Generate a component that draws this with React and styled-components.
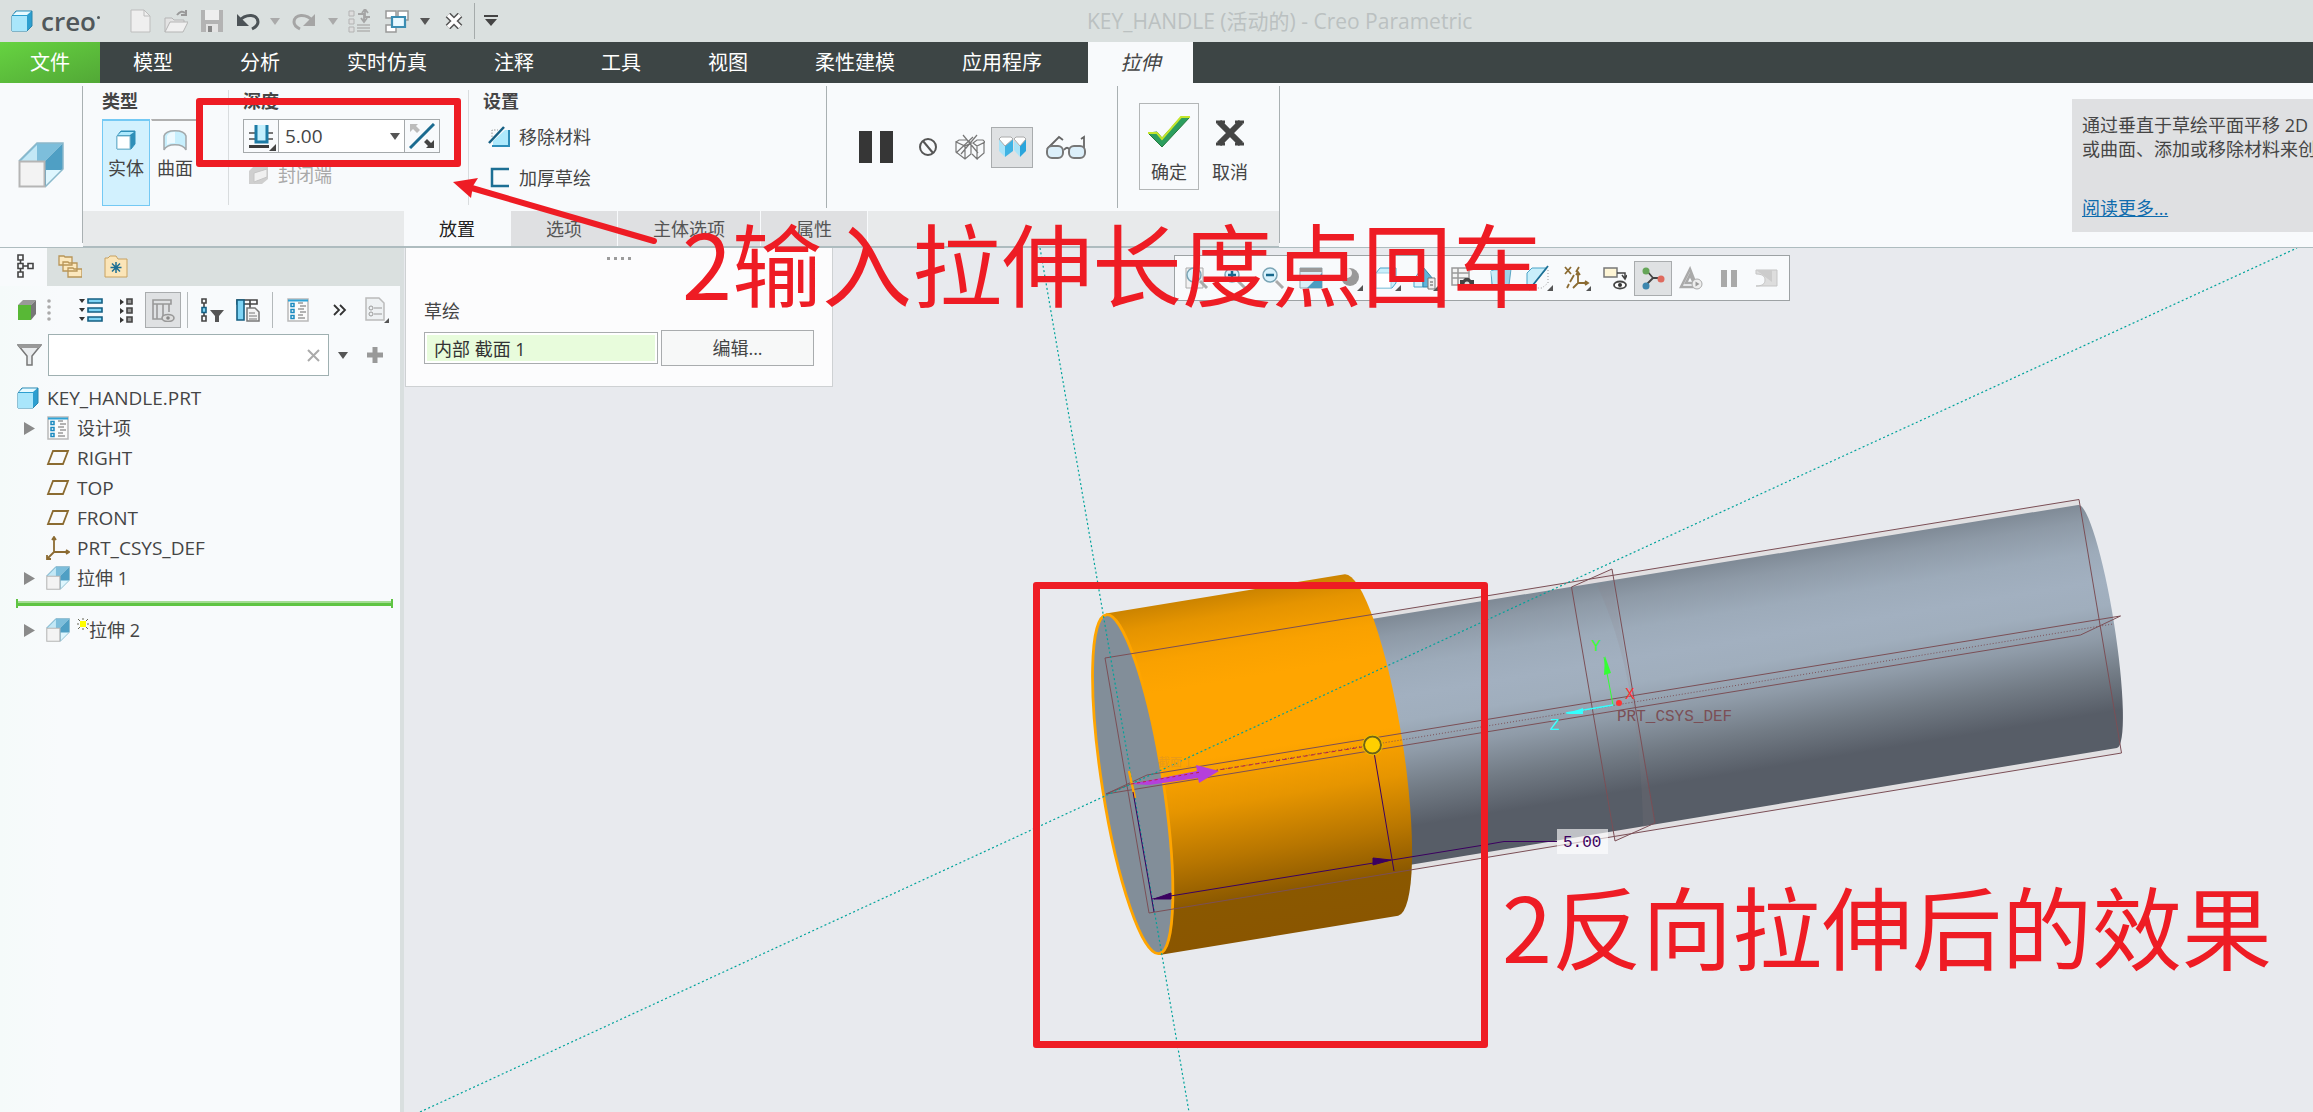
import React from "react";
import styled, { createGlobalStyle, css } from "styled-components";

const Global = createGlobalStyle`
  * { box-sizing: border-box; }
  body { margin: 0; background: #e8eaee; overflow: hidden; }
  button, input { font: inherit; color: inherit; margin: 0; }
  svg { display: block; flex: none; }
`;

const Page = styled.div`
  position: relative;
  display: flex;
  flex-direction: column;
  min-height: 100vh;
  overflow: hidden;
  color: #454545;
  font: 18px/24px "Open Sans", "Noto Sans CJK SC", sans-serif;
`;

const plainButton = css`
  display: flex;
  flex: none;
  align-items: center;
  justify-content: center;
  padding: 0;
  border: 0;
  background: none;
  white-space: nowrap;
`;

/* ---------- title bar ---------- */
const TitleBar = styled.header`
  display: flex;
  align-items: center;
  height: 42px;
  background: #dae0df;
`;
const Brand = styled.div`
  display: flex;
  align-items: center;
  gap: 8px;
  width: 122px;
  padding-left: 11px;
  color: #50575a;
  font: 600 26px/32px "Open Sans", sans-serif;
`;
const BrandName = styled.span`
  display: flex;
  align-items: center;
  gap: 1px;
`;
const BrandDot = styled.i`
  width: 3px;
  height: 3px;
  margin-bottom: 8px;
  border-radius: 50%;
  background: #50575a;
`;
const QuickButton = styled.button`
  ${plainButton}
  width: ${(p) => p.$w || 36}px;
  height: 36px;
`;
const QuickRule = styled.span`
  width: 1px;
  height: 36px;
  background: #a5abab;
`;
const WindowTitle = styled.h1`
  flex: 1;
  margin: 0;
  padding-left: 580px;
  color: #bbc1c1;
  font-size: 21px;
  font-weight: 400;
`;

/* ---------- menu tabs ---------- */
const MenuBar = styled.nav`
  display: flex;
  height: 41px;
  background: #3d4545;
  color: #fff;
  font-size: 20px;
`;
const MenuTab = styled.button`
  ${plainButton}
  padding: 0 34px 0 33px;
`;
const FileTab = styled.button`
  ${plainButton}
  width: 100px;
  background: linear-gradient(160deg, #66d341, #52a836);
`;
const ActiveTab = styled.button`
  ${plainButton}
  width: 105px;
  margin-left: 12px;
  background: #f8fafc;
  color: #454545;
  font-style: italic;
`;

/* ---------- ribbon ---------- */
const Ribbon = styled.section`
  display: flex;
  height: 165px;
  border-bottom: 1px solid #aebcbf;
  background: #f8fafc;
`;
const FeatureCell = styled.div`
  display: flex;
  align-items: center;
  justify-content: center;
  width: 83px;
  margin: 3px 0 4px;
  border-right: 1px solid #a9b0b2;
`;
const Dashboard = styled.div`
  display: flex;
  flex-direction: column;
  width: 1196px;
`;
const Groups = styled.div`
  display: flex;
  height: 128px;
`;
const Group = styled.div`
  display: flex;
  flex-direction: column;
  width: ${(p) => p.$w}px;
  margin: 7px 0 6px;
  padding-left: ${(p) => p.$pl}px;
  border-right: 1px solid ${(p) => (p.$open ? "transparent" : "#d9dcde")};
`;
const GroupTitle = styled.h2`
  margin: 0 0 6px;
  font-size: 18px;
  line-height: 23px;
  font-weight: 700;
`;
const TypeRow = styled.div`
  display: flex;
  gap: 1px;
`;
const TypeButton = styled.button`
  ${plainButton}
  flex-direction: column;
  justify-content: flex-start;
  gap: 5px;
  width: 48px;
  height: 87px;
  padding-top: 8px;
  border: 1px solid ${(p) => (p.$on ? "#74c9f4" : "transparent")};
  border-top: 2px solid ${(p) => (p.$on ? "#74c9f4" : "#b0b0b0")};
  background: ${(p) => (p.$on ? "#d2f1fe" : "none")};
`;
const DepthBox = styled.div`
  display: flex;
  width: 197px;
  height: 34px;
  border: 1px solid #a5a9ab;
`;
const DepthButton = styled.button`
  ${plainButton}
  width: 34px;
`;
const DepthField = styled.div`
  display: flex;
  flex: 1;
  align-items: center;
  padding-right: 4px;
  border: solid #a5a9ab;
  border-width: 0 1px;
  background: #fff;
`;
const DepthInput = styled.input`
  flex: 1;
  width: 80px;
  padding: 0 6px;
  border: 0;
  background: none;
  outline: 0;
  font-size: 19px;
`;
const Option = styled.button`
  ${plainButton}
  justify-content: flex-start;
  gap: 9px;
  height: ${(p) => p.$h || 41}px;
  padding-left: 5px;
  color: ${(p) => (p.$off ? "#a9a9a9" : "inherit")};
`;
const Options = styled.div`
  display: flex;
  flex-direction: column;
  margin-top: -3px;
`;
const Controls = styled.div`
  display: flex;
  align-items: center;
  width: 292px;
  margin: 3px 0;
  padding-left: 22px;
  border: solid #a9b0b2;
  border-width: 0 1px;
`;
const ControlButton = styled.button`
  ${plainButton}
  width: ${(p) => p.$w}px;
  height: 41px;
  border: 1px solid ${(p) => (p.$on ? "#a9acae" : "transparent")};
  background: ${(p) => (p.$on ? "#dfe1e3" : "none")};
`;
const Finish = styled.div`
  display: flex;
  gap: 1px;
  padding: 20px 0 0 21px;
`;
const FinishButton = styled.button`
  ${plainButton}
  flex-direction: column;
  justify-content: flex-end;
  gap: 10px;
  width: 60px;
  height: 87px;
  padding-bottom: 5px;
  border: 1px solid ${(p) => (p.$on ? "#b3b6b7" : "transparent")};
`;
const PanelTabs = styled.div`
  display: flex;
  height: 36px;
  padding-left: 321px;
  border-bottom: 1px solid #aebcbf;
  background: #e8eaeb;
`;
const PanelTab = styled.button`
  ${plainButton}
  padding: 0 35px;
  border-right: 1px solid #f8fafc;
  background: ${(p) => (p.$on ? "#f8fafc" : "#dfe0e2")};
  color: ${(p) => (p.$on ? "#222" : "#555")};
`;
const RibbonEnd = styled.div`
  flex: 1;
  display: flex;
  justify-content: flex-end;
  margin: 3px 0 4px;
  padding-top: 13px;
  border-left: 1px solid #a9b0b2;
`;
const Help = styled.aside`
  width: 241px;
  height: 133px;
  padding: 14px 0 0 10px;
  overflow: hidden;
  background: #dfe0e2;
  white-space: nowrap;
`;
const HelpText = styled.p`
  margin: 0 0 35px;
`;
const HelpLink = styled.a`
  color: #106cad;
`;

/* ---------- model tree ---------- */
const Workspace = styled.main`
  flex: 1;
  display: flex;
`;
const Sidebar = styled.aside`
  display: flex;
  flex-direction: column;
  width: 404px;
  border-right: 4px solid #d9dfdf;
  background: linear-gradient(90deg, #f5fafa, #f8fafc 60px);
`;
const SideTabs = styled.div`
  display: flex;
  height: 38px;
  background: #dae0df;
`;
const SideTab = styled.button`
  ${plainButton}
  width: ${(p) => p.$w}px;
  padding-bottom: 2px;
  padding-left: 4px;
  background: ${(p) => (p.$on ? "#f8fafc" : "none")};
`;
const SideTools = styled.div`
  display: flex;
  align-items: center;
  height: 48px;
  padding-left: 9px;
`;
const SideTool = styled.button`
  ${plainButton}
  width: ${(p) => p.$w || 36}px;
  height: 36px;
  margin-left: ${(p) => (p.$on ? 8 : 0)}px;
  border: 1px solid ${(p) => (p.$on ? "#a9acae" : "transparent")};
  background: ${(p) => (p.$on ? "#dfe1e3" : "none")};
`;
const ToolRule = styled.span`
  width: 1px;
  height: 36px;
  margin: 0 6px;
  background: #b4b9bb;
`;
const FilterRow = styled.div`
  display: flex;
  align-items: center;
  height: 42px;
  padding-left: 17px;
`;
const FilterBox = styled.div`
  display: flex;
  align-items: center;
  width: 281px;
  height: 42px;
  margin-left: 6px;
  padding-right: 8px;
  border: 1px solid #9fb0b1;
  background: #fff;
`;
const FilterInput = styled.input`
  flex: 1;
  min-width: 0;
  border: 0;
  outline: 0;
  background: none;
`;
const Tree = styled.ul`
  margin: 0;
  padding: 7px 0 0 16px;
  list-style: none;
`;
const TreeRow = styled.li`
  display: flex;
  align-items: center;
  gap: ${(p) => (p.$root ? 8 : 7)}px;
  height: 30px;
  padding-left: ${(p) => (p.$root ? 1 : 0)}px;
  font-size: ${(p) => (p.$latin ? 19 : 18)}px;
`;
const Twisty = styled.span`
  display: flex;
  justify-content: flex-end;
  width: 23px;
  padding-right: 4px;
`;
const NodeName = styled.span`
  display: flex;
`;
const InsertMark = styled.li`
  height: 22px;
  padding: 6px 7px 0 0;
`;
const InsertBar = styled.div`
  height: 9px;
  border: solid #5fc443;
  border-width: 0 2px;
  background: linear-gradient(transparent 2px, #a4dc94 2px 4px, #5fc443 4px 7px, transparent 7px);
`;

/* ---------- graphics area ---------- */
const Viewport = styled.section`
  position: relative;
  flex: 1;
  overflow: hidden;
`;
const Scene = styled.svg`
  position: absolute;
  inset: 0;
  width: 100%;
  height: 100%;
`;
const Placement = styled.div`
  position: absolute;
  top: 0;
  left: 1px;
  display: flex;
  flex-direction: column;
  width: 428px;
  height: 139px;
  padding: 9px 18px 0;
  border: 1px solid #ced1d3;
  border-top: 0;
  background: #fcfcfd;
`;
const Grip = styled.div`
  display: flex;
  justify-content: center;
  gap: 4px;
  height: 42px;
`;
const GripDot = styled.i`
  width: 3px;
  height: 3px;
  background: #9b9b9b;
`;
const SketchRow = styled.div`
  display: flex;
  align-items: center;
  gap: 3px;
  margin-top: 7px;
`;
const SketchInput = styled.input`
  width: 234px;
  height: 32px;
  padding: 0 9px;
  border: 1px solid #a9acae;
  outline: 0;
  background: #e8fcdc;
  box-shadow: inset 0 0 0 2px #fff;
  color: #333;
`;
const EditButton = styled.button`
  ${plainButton}
  width: 153px;
  height: 36px;
  border: 1px solid #a9acae;
  background: #f7f8f8;
`;
const ViewTools = styled.div`
  position: absolute;
  top: 7px;
  left: 770px;
  display: flex;
  align-items: center;
  height: 46px;
  padding: 0 3px;
  border: 1px solid #9da2a4;
  background: #f8fafc;
`;
const ViewTool = styled.button`
  ${plainButton}
  width: 38px;
  height: 35px;
  border: 1px solid ${(p) => (p.$on ? "#a9acae" : "transparent")};
  background: ${(p) => (p.$on ? "#dfe1e3" : "none")};
`;

/* ---------- markup on top of the window ---------- */
const MarkBox = styled.div`
  position: absolute;
  top: ${(p) => p.$y}px;
  left: ${(p) => p.$x}px;
  width: ${(p) => p.$w}px;
  height: ${(p) => p.$h}px;
  border: 7px solid #ee1c24;
  border-radius: 3px;
  pointer-events: none;
`;
const MarkText = styled.p`
  position: absolute;
  top: ${(p) => p.$y}px;
  left: ${(p) => p.$x}px;
  margin: 0;
  color: #ee1c24;
  font: 90px/100px "Noto Sans CJK SC", sans-serif;
  white-space: nowrap;
  pointer-events: none;
`;
const MarkArrow = styled.svg`
  position: absolute;
  top: 170px;
  left: 445px;
  pointer-events: none;
`;

/* ---------- icons ---------- */
const Ic = ({ w = 24, h = 24, children, ...rest }) => (
  <svg width={w} height={h} viewBox={`0 0 ${w} ${h}`} fill="none" aria-hidden="true" {...rest}>{children}</svg>
);
const Caret = ({ c = "#555" }) => <Ic w={10} h={7}><path d="M0 0h10L5 7z" fill={c} /></Ic>;
const Cube = ({ s = 22 }) => (
  <svg width={s} height={s} viewBox="0 0 22 22" aria-hidden="true">
    <path d="M1 6 5 1h16v15l-5 5H1z" fill="#2d9fd0" stroke="#2b86ad" />
    <path d="M1 6h15v15H1z" fill="#a9e6fb" /><path d="M2 5 5.500 1.500H20L16 5z" fill="#e8faff" />
  </svg>
);
const Extrude = ({ s = 24 }) => (
  <svg width={s} height={s} viewBox="0 0 46 46" aria-hidden="true">
    <path d="M1 19 19 1h26L27 19z" fill="#7dbedb" /><path d="M27 19 45 1v26L27 45z" fill="#4f9fc4" />
    <path d="M3 19 19 3v16z" fill="#c3e8f6" /><path d="M28 28h17L28 45z" fill="#def6fe" />
    <path d="M1 19 19 1h26v26L27 45" fill="none" stroke="#8cb8ca" strokeWidth="1.500" />
    <path d="M1.500 19.500h25v25h-25z" fill="#f3f3f3" stroke="#b5b5b5" strokeWidth="2" />
  </svg>
);
const DesignItems = () => (
  <svg width={24} height={24} viewBox="-1 0 24 24" aria-hidden="true">
    <path d="M1 1h20v22H1z" fill="#fbfbfb" stroke="#b9b9b9" strokeWidth="1.500" /><path d="M1 2.500h20" stroke="#2fa3d6" strokeWidth="2" />
    <path d="M4 5.500h3v3H4zM4 11.500h3v3H4zM4 17.500h3v3H4z" fill="#fff" stroke="#1c8ac0" strokeWidth="1.500" />
    <path d="M11 5h5M13 8h6M11 11h6M13 14h6M11 17h5M11 20h7" stroke="#9a9a9a" strokeWidth="1.300" />
  </svg>
);
const Plane = () => <Ic><path d="M7 5h15l-5 13H2z" stroke="#8b6b32" strokeWidth="1.800" /></Ic>;
const Csys = () => <Ic><path d="M8 1v15h15M8 16l-7 7M6 4l2-3 2 3M20 14l3 2-3 2M1 19v4h4" stroke="#8b6b32" strokeWidth="1.800" /></Ic>;
const Magnifier = ({ mark, page }) => (
  <Ic>
    {page && <path d="M1 2h17v20H1z" fill="#f2f2f2" stroke="#aaa" />}
    <path d="m15 15 7 7" stroke="#aaa" strokeWidth="3" /><circle cx="9" cy="9" r="7" fill="#d9f2fc" stroke="#7aa4b5" strokeWidth="1.500" />
    {mark && <path d={mark} stroke="#16678c" strokeWidth="2.500" />}
  </Ic>
);
const Corner = () => <path d="M28 20v6h-6z" fill="#555" />;
const viewIcons = [
  ["重新调整", <Magnifier page />],
  ["放大", <Magnifier mark="M5 9h8M9 5v8" />],
  ["缩小", <Magnifier mark="M5 9h8" />],
  ["重画", <Ic><path d="M1 2h22v20H1z" fill="#d9eef6" stroke="#8fa5ae" /><path d="M1 2h22v4H1z" fill="#999" /><path d="M23 7v15H8z" fill="#4a9cc0" /></Ic>],
  ["显示样式", <Ic w={28} h={26}><circle cx="15" cy="12" r="9" fill="#999" /><circle cx="12" cy="8" r="5" fill="#eee" /><Corner /></Ic>],
  ["已保存方向", <Ic w={28} h={26}><path d="M3 8 7 3h16v15l-4 5H3z" fill="#c9effb" stroke="#4ba3c7" /><path d="M3 8h15v15H3z" fill="#fff" stroke="#9ccfe2" /><Corner /></Ic>],
  ["视图管理器", <Ic w={28} h={26}><path d="M3 14 12 2v20H3z" fill="#d9f2fc" stroke="#4ba3c7" /><path d="M12 2 22 14v8H12z" fill="#5fb4da" stroke="#2f86ab" /><path d="M17 13h7v11h-7z" fill="#eee" stroke="#777" /><path d="M19 17h3M19 20h3" stroke="#555" /><Corner /></Ic>],
  ["捕捉图像", <Ic><path d="M1 2h17v17H1zM1 7h17M1 12h17M7 2v17" stroke="#999" strokeWidth="1.500" fill="#f4f4f4" /><path d="M9 14h3l2-2h4l2 2h3v8H9z" fill="#444" /><circle cx="16" cy="18" r="2.500" fill="#ddd" /></Ic>],
  ["外观", <Ic><path d="M2 5 8 2l14 1-2 16-9 3-8-3z" fill="#9dd4ea" stroke="#5aa5c3" /><path d="M2 5h12l-1 16-9-3z" fill="#c8ecf8" /></Ic>],
  ["截面", <Ic w={28} h={26}><path d="M2 8 7 3h15L6 22H2z" fill="#c9effb" stroke="#4ba3c7" /><path d="M23 1 4 25" stroke="#1d6f94" strokeWidth="1.800" /><path d="M23 5v13l-6 5H9" stroke="#999" strokeDasharray="1 2" /><Corner /></Ic>],
  ["基准显示过滤器", <Ic w={28} h={26}><path d="m2 2 6 7M8 2 2 9M16 2l-3 5M11 10 7 17M6 19l-2 4M15 8v10h10M15 18l-5 5M13 10l2-3 2 3M22 16l3 2-3 2" stroke="#8b6b32" strokeWidth="1.800" /><path d="M28 21v5h-5z" fill="#555" /></Ic>],
  ["注释显示", <Ic><path d="M1 2h13v9H1z" fill="#fff6d6" stroke="#777" strokeWidth="1.500" /><path d="M14 7h8v5M19 9l3 4 2-4" stroke="#444" strokeWidth="1.500" /><ellipse cx="17" cy="19" rx="6" ry="3.500" fill="#fff" stroke="#444" strokeWidth="1.800" /><circle cx="17" cy="19" r="2" fill="#333" /></Ic>],
  ["旋转中心", <Ic><path d="m12 12-6-7M12 12l8 0M12 12l-7 7" stroke="#444" strokeWidth="1.800" /><circle cx="5" cy="5" r="3.500" fill="#65a558" /><circle cx="20" cy="13" r="3.500" fill="#df6a5e" /><circle cx="5" cy="20" r="3.500" fill="#3d87ae" /></Ic>, true],
  ["仿真", <Ic><path d="M11 3 2 21h16zM11 9l-4 8h8z" stroke="#aaa" strokeWidth="2.500" /><circle cx="18" cy="18" r="5" fill="#eee" stroke="#aaa" /><path d="m16.500 15.500 4 2.500-4 2.500z" fill="#999" /></Ic>],
  ["暂停仿真", <Ic><path d="M4 4h6v17H4zM14 4h6v17h-6z" fill="#a9a9a9" /></Ic>],
  ["流体", <Ic><path d="M1 4h21v16H1c6 0 9-2 9-6s-3-6-9-6z" fill="#ddd" stroke="#c5c5c5" /><path d="M1 4h16v12" fill="#ccc" /></Ic>],
];

const Quick = () => (
  <>
    <QuickButton aria-label="新建"><Ic w={21}><path d="M1 1h13l6 6v16H1z" fill="#efefef" stroke="#bdbdbd" /><path d="M14 1v6h6" stroke="#bdbdbd" /></Ic></QuickButton>
    <QuickButton aria-label="打开"><Ic><path d="M1 23V9h7l2 2h10v3" fill="#e3e3e3" stroke="#b5b5b5" /><path d="m1 23 5-10h18l-5 10z" fill="#f0f0f0" stroke="#b5b5b5" /><path d="M13 6c3-4 6-4 8-2M22 1v5h-5" stroke="#999" strokeWidth="2" /></Ic></QuickButton>
    <QuickButton aria-label="保存"><Ic w={22}><path d="M0 1h22v22H0z" fill="#b3b3b3" /><path d="M4 1h14v10H4z" fill="#eee" /><path d="M5 15h12v8H5z" fill="#e3e3e3" /><path d="M7 17h4v6H7z" fill="#888" /></Ic></QuickButton>
    <QuickButton aria-label="撤消"><Ic><path d="M3 12c7-8 19-7 19 1 0 3-2 5-6 7" stroke="#4c5357" strokeWidth="3" /><path d="M1 5v12h12z" fill="#4c5357" /></Ic></QuickButton>
    <QuickButton $w={18} aria-label="撤消列表"><Caret c="#aaa" /></QuickButton>
    <QuickButton $w={40} aria-label="重做"><Ic><path d="M21 12C14 4 2 5 2 13c0 3 2 5 6 7" stroke="#a5a5a5" strokeWidth="3" /><path d="M23 5v12H11z" fill="#a5a5a5" /></Ic></QuickButton>
    <QuickButton $w={18} aria-label="重做列表"><Caret c="#aaa" /></QuickButton>
    <QuickButton aria-label="重新生成"><Ic><path d="M1 2h5v5H1zM1 10h5v5H1zM1 18h5v5H1z" fill="#ddd" stroke="#b3b3b3" /><path d="M9 16h13M9 19h13M9 22h13" stroke="#b3b3b3" strokeWidth="1.500" /><path d="M10 5h6v7M13 9l3 4 3-4M22 8h-5V1M14 4l3-4 3 4" stroke="#a5a5a5" strokeWidth="1.800" /></Ic></QuickButton>
    <QuickButton $w={38} aria-label="窗口"><Ic><path d="M1 2h10v7H1zM13 2h10v9H13zM1 16h10v7H1z" fill="#fff" stroke="#999" strokeWidth="1.500" /><path d="M7 8h13v10H7z" fill="#e7f8ff" stroke="#3b8db2" strokeWidth="2.200" /></Ic></QuickButton>
    <QuickButton $w={18} aria-label="窗口列表"><Caret /></QuickButton>
    <QuickButton $w={40} aria-label="关闭"><Ic w={18} h={16}><path d="m3 2 12 12M15 2 3 14" stroke="#555" strokeWidth="6.500" /><path d="m3 2 12 12M15 2 3 14" stroke="#fff" strokeWidth="3.500" /></Ic></QuickButton>
    <QuickRule />
    <QuickButton $w={32} aria-label="自定义快速访问工具栏"><Ic w={14} h={12}><path d="M0 1h14" stroke="#444" strokeWidth="2" /><path d="M1 4h12l-6 7z" fill="#444" /></Ic></QuickButton>
  </>
);

const menu = ["模型", "分析", "实时仿真", "注释", "工具", "视图", "柔性建模", "应用程序"];

const Arrow = () => <Ic w={11} h={13}><path d="M0 0v13l11-6.500z" fill="#8a8a8a" /></Ic>;

const nodes = [
  { icon: <DesignItems />, name: "设计项", open: true },
  { icon: <Plane />, name: "RIGHT", latin: true },
  { icon: <Plane />, name: "TOP", latin: true },
  { icon: <Plane />, name: "FRONT", latin: true },
  { icon: <Csys />, name: "PRT_CSYS_DEF", latin: true },
  { icon: <Extrude />, name: "拉伸 1", open: true },
];

const Model = () => (
  <Scene viewBox="404 248 1909 864" preserveAspectRatio="xMinYMin slice" fill="none" role="img" aria-label="KEY_HANDLE">
    <defs>
      <linearGradient id="steel" gradientUnits="userSpaceOnUse" x1="2077.600" y1="505.300" x2="2117.400" y2="747.700">
        <stop offset="0" stopColor="#808b97" /><stop offset=".07" stopColor="#8e9aa7" /><stop offset=".2" stopColor="#9dabba" />
        <stop offset=".32" stopColor="#a2b0c0" /><stop offset=".42" stopColor="#a0aebd" /><stop offset=".55" stopColor="#8f9ba8" />
        <stop offset=".7" stopColor="#727b85" /><stop offset=".85" stopColor="#575d67" /><stop offset="1" stopColor="#575d67" />
      </linearGradient>
      <linearGradient id="amber" gradientUnits="userSpaceOnUse" x1="1104.400" y1="613.900" x2="1161" y2="954.500">
        <stop offset="0" stopColor="#cc8400" /><stop offset=".06" stopColor="#e59400" /><stop offset=".16" stopColor="#f9a100" />
        <stop offset=".25" stopColor="#ffa500" /><stop offset=".46" stopColor="#ffa500" /><stop offset=".6" stopColor="#e69500" />
        <stop offset=".75" stopColor="#b87600" /><stop offset=".88" stopColor="#8a5800" /><stop offset="1" stopColor="#8a5600" />
      </linearGradient>
    </defs>
    <path d="M1105 658 2079 499l42 254L1149 913z" fill="#e1e0e2" />
    <path d="m1571 587 41-18 43 254-40 18z" fill="#e1dcdf" />
    <path d="M1353 622 2078.100 505A123 16.800 81 0 1 2116.900 748L1391 868z" fill="url(#steel)" />
    <path d="M1597 585c28 60 44 140 46 242l12-4-43-241z" fill="#8f7f87" fillOpacity=".15" />
    <path d="M1106 613.500 1344.800 574.300A172.800 31.600 81.100 0 1 1398.200 915.700L1159.400 955z" fill="url(#amber)" />
    <ellipse cx="1132.700" cy="784.200" rx="171.500" ry="30.500" transform="rotate(81.100 1132.700 784.200)" fill="#828e99" stroke="#ffa500" strokeWidth="2.800" />
    <g stroke="#7b4f56">
      <path d="M1105 658 2079 499.500 2121.500 753 1149 913z" />
      <path d="m1106 794 41-19 973.500-159-40 19zM1106 794l25-10" />
      <path d="M1571.500 587 1612 569l43 254-40 18z" />
      <path d="M1131 784 2113 624" strokeDasharray="1 2" />
    </g>
    <path d="M1131 784 1362 747" stroke="#b0204a" strokeDasharray="4 3" />
    <g stroke="#00a39b" strokeWidth="1.200" strokeDasharray="2 2.500">
      <path d="m1040 248 149 864" /><path d="M420 1112 1131 784 1530 600 1791 480 2297 248" />
    </g>
    <text x="1158" y="767" fill="#e89a1a" fontSize="12" fontFamily="Noto Sans CJK SC, sans-serif">截面 1</text>
    <path d="m1129 771 6 27" stroke="#ffa500" strokeWidth="2.500" />
    <path d="m1131 784 66-13-1-6 23 6-20 12-1-5-49 7z" fill="#b53fdb" />
    <path d="M1131 784l70-12" stroke="#c0204a" strokeDasharray="3 3" />
    <g stroke="#3b0060">
      <path d="m1133 792 21 120M1374 752l20 119M1152 899l240-39 92-15 20-3.500h53" />
      <path d="m1154 899 17-6v6zM1391 860l-18-2v7z" fill="#3b0060" />
    </g>
    <circle cx="1372.500" cy="745" r="8.500" fill="#ffcf00" stroke="#6d6418" strokeWidth="2" /><circle cx="1372.500" cy="745" r="10" stroke="#e8bd00" />
    <g fontFamily="Liberation Mono, monospace" fontSize="16">
      <path d="m1613 705-9-48" stroke="#3f3" /><path d="m1605 656-1 19 7-2z" fill="#3f3" />
      <path d="m1613 705-47 8" stroke="#3ff" strokeWidth="1.500" /><path d="m1566 714 17-6v6z" fill="#3ff" />
      <circle cx="1619" cy="703" r="3" fill="#f33" />
      <text x="1591" y="651" fill="#3f3">Y</text><text x="1625" y="699" fill="#f33">X</text><text x="1550" y="730" fill="#3ff">Z</text>
      <text x="1617" y="721" fill="#7b4f56">PRT_CSYS_DEF</text>
      <path d="M1557 829h51v25h-51z" fill="#fff" fillOpacity=".62" />
      <text x="1563" y="847" fill="#3b0060">5.00</text>
    </g>
  </Scene>
);

export default function App() {
  return (
    <Page>
      <Global />
      <TitleBar>
        <Brand><Cube /><BrandName>creo<BrandDot /></BrandName></Brand>
        <Quick />
        <WindowTitle>KEY_HANDLE (活动的) - Creo Parametric</WindowTitle>
      </TitleBar>
      <MenuBar>
        <FileTab>文件</FileTab>
        {menu.map((m) => <MenuTab key={m}>{m}</MenuTab>)}
        <ActiveTab>拉伸</ActiveTab>
      </MenuBar>

      <Ribbon>
        <FeatureCell><Extrude s={46} /></FeatureCell>
        <Dashboard>
          <Groups>
            <Group $w={146} $pl={19}>
              <GroupTitle>类型</GroupTitle>
              <TypeRow>
                <TypeButton $on>
                  <Ic w={22} h={22}><path d="m2 7 4-5h14v13l-4 5H2z" fill="#2f8fb8" stroke="#2f8fb8" /><path d="M2 7h13v13H2z" fill="#fff" stroke="#7fb9cf" /><path d="m3 6 3-3h13l-4 3z" fill="#aee9fd" /></Ic>
                  实体
                </TypeButton>
                <TypeButton>
                  <Ic w={24} h={22}><path d="M1 21V7c2-7 20-7 22 0v14c-3-7-19-7-22 0z" fill="#c7effd" stroke="#a3a8aa" strokeWidth="1.500" /><path d="M4 14V7c2-4 6-4 8-4v11c-3 0-6 0-8 2z" fill="#fff" fillOpacity=".7" /></Ic>
                  曲面
                </TypeButton>
              </TypeRow>
            </Group>
            <Group $w={240} $pl={14}>
              <GroupTitle>深度</GroupTitle>
              <DepthBox>
                <DepthButton aria-label="深度选项"><Ic w={30} h={30}><path d="M3 12h24M3 18h24" stroke="#777" strokeWidth="2" /><path d="M10 4v17h11V4" fill="#c3effd" stroke="#1d7ba5" strokeWidth="3" /><path d="M3 25.500h20" stroke="#3c3c3c" strokeWidth="3" /><path d="M30 23v7h-7z" fill="#444" /></Ic></DepthButton>
                <DepthField><DepthInput aria-label="深度" defaultValue="5.00" /><Caret /></DepthField>
                <DepthButton aria-label="反向"><Ic w={26} h={26}><path d="M1 25 25 1" stroke="#1b6b90" strokeWidth="3" /><path d="M1 1h8L7 3l4 4-3 3-4-4-3 3z" fill="#bbb" /><path d="M25 25h-8l2-2-4-4 3-3 4 4 3-3z" fill="#444" /></Ic></DepthButton>
              </DepthBox>
              <Option $off $h={44} disabled><Ic w={21} h={20}><path d="M1 6 5 2l15-1v13l-6 5H1z" fill="#cfcfcf" /><path d="m6 8 13-4v8L6 17z" fill="#f0f0f0" stroke="#c5c5c5" /></Ic>封闭端</Option>
            </Group>
            <Group $w={357} $pl={14} $open>
              <GroupTitle>设置</GroupTitle>
              <Options>
                <Option><Ic w={22} h={22}><path d="M5 19V15L17 4h3v15z" fill="#ade9fc" /><path d="M1 17 16 1" stroke="#155f83" strokeWidth="2.500" /><path d="M4 20h17V4" stroke="#2d8db8" strokeWidth="2" /><path d="M4 11V4h6" stroke="#999" strokeDasharray="1.500 1.500" /></Ic>移除材料</Option>
                <Option><Ic w={22} h={22}><path d="M21 2H4v17h17" stroke="#1d6f94" strokeWidth="2.500" /></Ic>加厚草绘</Option>
              </Options>
            </Group>
            <Controls>
              <ControlButton $w={54} aria-label="暂停"><Ic w={36} h={34}><path d="M1 1h13v32H1zM22 1h13v32H22z" fill="#363636" /></Ic></ControlButton>
              <ControlButton $w={50} aria-label="无预览"><Ic w={20} h={20}><circle cx="10" cy="10" r="8" stroke="#555" strokeWidth="2" /><path d="m5 4 10 12" stroke="#555" strokeWidth="2" /></Ic></ControlButton>
              <ControlButton $w={34} aria-label="未附着"><Ic w={30} h={26}><path d="m1 8 3-2h8l4 3-6 3-9-4v10l9 7 6-5V9M10 12v13M18 9l4-3h6l2 2-8 4zM22 12v13l-5-5M22 25l7-6V8M8 1l15 18M22 1 6 20M1 19 18 3" stroke="#777" strokeWidth="1.200" /></Ic></ControlButton>
              <ControlButton $w={4} as="span" />
              <ControlButton $w={42} $on aria-label="附着"><Ic w={30} h={26}><path d="m2 5 6 7v11l-6-6z" fill="#a9e3f8" /><path d="m8 12 8-7v12l-8 6z" fill="#3fb3e3" /><path d="m2 5 2-2h10l2 2-8 7z" fill="#fff" stroke="#aaa" /><path d="m17 7 6 5v11l-6-7z" fill="#a9e3f8" /><path d="m23 12 6-7v12l-6 6z" fill="#2ba5dc" /><path d="m17 5 2-2h8l2 2-6 7z" fill="#fff" stroke="#aaa" /></Ic></ControlButton>
              <ControlButton $w={66} aria-label="几何预览"><Ic w={42} h={26}><path d="m2 15 12-12 4 3M39 15V3l-3 2M19 16c2-3 4-3 6 0" stroke="#666" strokeWidth="1.800" /><rect x="2" y="12" width="16" height="12" rx="5" fill="#dceffa" stroke="#777" strokeWidth="2" /><rect x="24" y="12" width="16" height="12" rx="5" fill="#dceffa" stroke="#777" strokeWidth="2" /></Ic></ControlButton>
            </Controls>
            <Finish>
              <FinishButton $on><Ic w={44} h={34}><path d="m1 17 9-1 5 6L34 1h9L15 31z" fill="#2c9e5f" stroke="#247a3c" /><path d="M1 17h9l5 6L34 1h9" stroke="#c3e52c" strokeWidth="2" /></Ic>确定</FinishButton>
              <FinishButton><Ic w={30} h={34}><path d="m4 6 22 22M26 6 4 28" stroke="#454545" strokeWidth="6" /><path d="M1 6h9M20 6h9M1 28h9M20 28h9" stroke="#454545" strokeWidth="3" /></Ic>取消</FinishButton>
            </Finish>
          </Groups>
          <PanelTabs>
            <PanelTab $on>放置</PanelTab>
            <PanelTab>选项</PanelTab>
            <PanelTab>主体选项</PanelTab>
            <PanelTab>属性</PanelTab>
          </PanelTabs>
        </Dashboard>
        <RibbonEnd>
          <Help>
            <HelpText>通过垂直于草绘平面平移 2D<br />或曲面、添加或移除材料来创</HelpText>
            <HelpLink href="#more">阅读更多...</HelpLink>
          </Help>
        </RibbonEnd>
      </Ribbon>

      <Workspace>
        <Sidebar>
          <SideTabs>
            <SideTab $w={47} $on aria-label="模型树"><Ic><path d="M4 1h5v5H4zM4 9.500h5v5H4zM4 18h5v5H4zM14 9.500h5v5h-5zM6.500 6v3.500M6.500 14.500V18M9 12h5" stroke="#444" strokeWidth="1.600" /></Ic></SideTab>
            <SideTab $w={42} aria-label="文件夹浏览器"><Ic><path d="M1 2h5l1 1h7v8H1zM5 8h5l1 1h8v8H5zM10 14h5l1 1h8v8H10z" fill="#fce8be" stroke="#b89558" strokeWidth="1.300" /></Ic></SideTab>
            <SideTab $w={50} aria-label="收藏夹"><Ic><path d="M1 4h3l2-2h6l2 3h9v18H1z" fill="#fbe5b8" stroke="#c8a260" /><path d="M12 8v11M6.500 13.500h11M8 9.500l8 8M16 9.500l-8 8" stroke="#1d6f94" strokeWidth="1.500" /></Ic></SideTab>
          </SideTabs>
          <SideTools>
            <SideTool aria-label="模型"><Ic w={20} h={22}><path d="m1 6 5-5h13l-5 5z" fill="#999" /><path d="m14 6 5-5v14l-5 6z" fill="#777" /><path d="M1 6h13v15H1z" fill="#58b836" /></Ic></SideTool>
            <Ic w={20} h={26}><g fill="#aaa"><circle cx="4" cy="4" r="1.800" /><circle cx="4" cy="10" r="1.800" /><circle cx="4" cy="16" r="1.800" /><circle cx="4" cy="22" r="1.800" /></g></Ic>
            <SideTool $w={52} aria-label="全部展开"><Ic w={24} h={26}><path d="M9 2h14v4H9zM9 11h14v4H9zM9 20h14v4H9z" fill="#7fd4f5" stroke="#155f83" strokeWidth="1.600" /><path d="M0 2h6L3 6zM0 11h6l-3 4zM0 20h6l-3 4z" fill="#333" /></Ic></SideTool>
            <SideTool $w={20} aria-label="全部折叠"><Ic w={14} h={26}><path d="M7 2h5v5H7zM7 11h5v5H7zM7 20h5v5H7z" fill="#999" stroke="#444" strokeWidth="1.600" /><path d="M0 2v6l4-3zM0 11v6l4-3zM0 20v6l4-3z" fill="#333" /></Ic></SideTool>
            <SideTool $on aria-label="显示列"><Ic><path d="M2 2h18v4H2zM2 6h4v15H2zM6 6v15M12 6v14M18 6v8M2 21h9" stroke="#999" strokeWidth="1.600" /><ellipse cx="17" cy="20" rx="6" ry="3.500" fill="#ddd" stroke="#999" strokeWidth="1.600" /><circle cx="17" cy="20" r="1.800" fill="#888" /></Ic></SideTool>
            <ToolRule />
            <SideTool aria-label="树过滤器"><Ic><path d="M2 1h4v4H2zM2 18h4v5H2zM4 5v4M4 15v3" stroke="#444" strokeWidth="1.600" /><path d="M2 9.500h4v5H2z" fill="#7fd4f5" stroke="#155f83" strokeWidth="1.600" /><path d="M10 12h14l-5 6v6h-4v-6z" fill="#555" /></Ic></SideTool>
            <SideTool aria-label="树列"><Ic><path d="M1 2h20v4H1zM14 2v8" stroke="#444" strokeWidth="1.600" /><path d="M1 2h7v20H1z" fill="#7fd4f5" stroke="#155f83" strokeWidth="1.600" /><path d="M11 10h8l4 4v9H11z" fill="#f4f4f4" stroke="#777" strokeWidth="1.500" /><path d="M13 15h6M13 18h8M13 21h8" stroke="#777" /></Ic></SideTool>
            <ToolRule />
            <SideTool $w={38} aria-label="设计项"><DesignItems /></SideTool>
            <SideTool $w={46} aria-label="更多"><Ic w={14} h={12}><path d="m1 1 5 5-5 5M7 1l5 5-5 5" stroke="#333" strokeWidth="1.800" /></Ic></SideTool>
            <SideTool $w={28} aria-label="设置"><Ic h={26}><path d="M1 1h13l5 5v17H1z" fill="#eef1f3" stroke="#bbb" strokeWidth="1.500" /><path d="M9 11h8M9 17h8" stroke="#999" /><circle cx="6" cy="11" r="2" stroke="#999" /><circle cx="6" cy="17" r="2" stroke="#999" /><path d="M24 21v5h-5z" fill="#555" /></Ic></SideTool>
          </SideTools>
          <FilterRow>
            <Ic w={25} h={24}><path d="M1 2h23L15 13v9h-5v-9z" fill="#e9ecee" stroke="#777" strokeWidth="1.500" /><path d="M1 2h23l-2 3H3z" fill="#999" /></Ic>
            <FilterBox>
              <FilterInput aria-label="过滤" />
              <Ic w={13} h={13}><path d="m1 1 11 11M12 1 1 12" stroke="#aaa" strokeWidth="2" /></Ic>
            </FilterBox>
            <SideTool $w={28} aria-label="过滤选项"><Caret /></SideTool>
            <SideTool aria-label="添加"><Ic w={18} h={18}><path d="M9 1v16M1 9h16" stroke="#999" strokeWidth="5" /></Ic></SideTool>
          </FilterRow>
          <Tree>
            <TreeRow $root $latin><Cube />KEY_HANDLE.PRT</TreeRow>
            {nodes.map((n) => (
              <TreeRow key={n.name} $latin={n.latin}><Twisty>{n.open && <Arrow />}</Twisty>{n.icon}<NodeName>{n.name}</NodeName></TreeRow>
            ))}
            <InsertMark><InsertBar /></InsertMark>
            <TreeRow>
              <Twisty><Arrow /></Twisty><Extrude />
              <NodeName>
                <Ic w={12} h={13}><path d="M3 3h6v6H3z" fill="#ff0" /><path d="m1 1 2 2M11 1 9 3M1 11l2-2M11 11 9 9M6 0v2M6 10v2M0 6h2M10 6h2" stroke="#665" /></Ic>
                拉伸 2
              </NodeName>
            </TreeRow>
          </Tree>
        </Sidebar>
        <Viewport>
          <Model />
          <Placement>
            <Grip><GripDot /><GripDot /><GripDot /><GripDot /></Grip>
            <label htmlFor="sketch">草绘</label>
            <SketchRow>
              <SketchInput id="sketch" defaultValue="内部 截面 1" />
              <EditButton>编辑...</EditButton>
            </SketchRow>
          </Placement>
          <ViewTools>
            {viewIcons.map(([name, icon, on]) => <ViewTool key={name} aria-label={name} $on={on}>{icon}</ViewTool>)}
          </ViewTools>
        </Viewport>
      </Workspace>

      <MarkBox $x={196} $y={98} $w={265} $h={69} />
      <MarkArrow width="215" height="80" viewBox="445 170 215 80" fill="none">
        <path d="M470 187.500 654 241" stroke="#ee1c24" strokeWidth="6" strokeLinecap="round" />
        <path d="m453 182 25-4-5 8-2 12z" fill="#ee1c24" />
      </MarkArrow>
      <MarkText $x={682} $y={211}>2输入拉伸长度点回车</MarkText>
      <MarkBox $x={1033} $y={582} $w={455} $h={466} />
      <MarkText $x={1502} $y={874}>2反向拉伸后的效果</MarkText>
    </Page>
  );
}
